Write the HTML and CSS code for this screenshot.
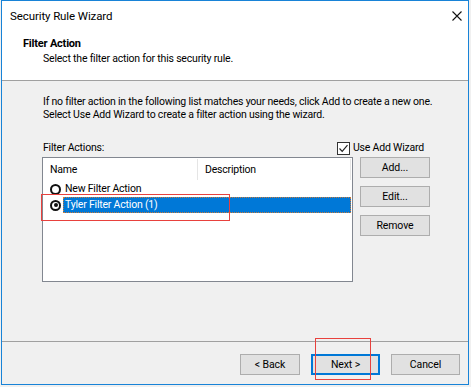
FILE: index.html
```html
<!DOCTYPE html>
<html lang="en">
<head>
  <meta charset="UTF-8">
  <title>Security Rule Wizard</title>
  <link rel="stylesheet" href="styles.css">
</head>
<body>

  <div class="window">
    <div class="titlebar">
      <span class="title">Security Rule Wizard</span>
      <svg class="close" width="10" height="10" viewBox="0 0 10 10">
        <path d="M0.5 0.5 L9.5 9.5 M9.5 0.5 L0.5 9.5" stroke="#111" stroke-width="1.1" fill="none"/>
      </svg>
    </div>

    <div class="header">
      <div class="header-title">Filter Action</div>
      <div class="header-sub">Select the filter action for this security rule.</div>
    </div>

    <div class="content">
      <p class="intro">If no filter action in the following list matches your needs, click Add to create a new one.<br>Select Use Add Wizard to create a filter action using the wizard.</p>

      <div class="actions-row">
        <span>Filter Actions:</span>
        <label class="check">
          <span class="box">
            <svg width="11" height="11" viewBox="0 0 11 11"><path d="M1.5 5.5 L4.2 8.3 L9.5 2.2" stroke="#222" stroke-width="1.2" fill="none"/></svg>
          </span>
          Use Add Wizard
        </label>
      </div>

      <div class="actions-grid">
        <div class="listbox">
          <div class="list-head">
            <div class="col-name">Name</div>
            <div class="col-desc">Description</div>
          </div>
          <div class="list-row">
            <span class="radio"></span>
            <span class="row-text">New Filter Action</span>
          </div>
          <div class="list-row">
            <span class="radio on"></span>
            <span class="row-text selected">Tyler Filter Action (1)</span>
          </div>
        </div>

        <div class="side-buttons">
          <button class="btn">Add...</button>
          <button class="btn">Edit...</button>
          <button class="btn">Remove</button>
        </div>
      </div>

      <!-- annotation box around the selected row -->
      <div class="mark mark-row"></div>
    </div>

    <div class="footer">
      <button class="btn back">&lt; Back</button>
      <button class="btn next">Next &gt;</button>
      <button class="btn cancel">Cancel</button>
      <div class="mark mark-next"></div>
    </div>
  </div>

</body>
</html>
```

FILE: styles.css
```css
body {
  margin: 0;
  background: #f0f0f0;
  font-family: Roboto, 'Liberation Sans', sans-serif;
  font-size: 10.5px;
  letter-spacing: -0.2px;
  color: #000;
}

.window {
  margin-left: 1px;
  width: 468px;
  height: 385px;
  box-sizing: border-box;
  border: 1px solid #1883d7;
  background: #f0f0f0;
  display: flex;
  flex-direction: column;
}

.titlebar {
  height: 29px;
  background: #fff;
  display: flex;
  align-items: center;
  justify-content: space-between;
  padding: 0 6px 0 8px;
}

.title {
  font-size: 11.5px;
  letter-spacing: -0.1px;
}

.header {
  background: #fff;
  height: 51px;
  border-bottom: 1px solid #a0a0a0;
  box-sizing: border-box;
  padding-top: 7px;
}

.header-title {
  font-weight: 700;
  font-size: 11px;
  padding-left: 21px;
  line-height: 14px;
}

.header-sub {
  padding-left: 41px;
  line-height: 15px;
}

.content {
  position: relative;
  flex: 1;
  padding: 14px 0 0 41px;
}

.intro {
  margin: 0;
  line-height: 13px;
  white-space: nowrap;
}

.actions-row {
  display: grid;
  grid-template-columns: 294px auto;
  align-items: end;
  margin-top: 20px;
  line-height: 14px;
}

.check {
  display: flex;
  align-items: center;
  gap: 3px;
}

.box {
  width: 11px;
  height: 11px;
  border: 1px solid #333;
  background: #fff;
  display: flex;
}

.actions-grid {
  display: flex;
  gap: 7px;
  margin-top: 2px;
  margin-left: -1px;
}

.listbox {
  width: 311px;
  height: 125px;
  box-sizing: border-box;
  border: 1px solid #828790;
  background: #fff;
}

.list-head {
  display: flex;
  height: 23px;
  align-items: center;
}

.list-head > div {
  height: 21px;
  line-height: 21px;
  padding-left: 7px;
}

.col-name {
  width: 147px;
  border-right: 1px solid #e5e5e5;
}

.col-desc {
  flex: 1;
  border-right: 1px solid #e5e5e5;
  margin-right: 1px;
}

.list-row {
  display: flex;
  align-items: center;
  height: 16px;
  padding-left: 7px;
}

.radio {
  width: 7px;
  height: 7px;
  border: 2px solid #111;
  border-radius: 50%;
  position: relative;
  margin-right: 2px;
}

.radio.on::after {
  content: "";
  position: absolute;
  left: 1.5px;
  top: 1.5px;
  width: 4px;
  height: 4px;
  border-radius: 50%;
  background: #111;
}

.row-text {
  line-height: 16px;
  padding-left: 2px;
}

.row-text.selected {
  flex: 1;
  margin-right: 1px;
  background: #0078d7;
  color: #fff;
  outline: 1px dotted #c87a3a;
  outline-offset: -1px;
}

.side-buttons {
  display: flex;
  flex-direction: column;
  gap: 8px;
}

.btn {
  font-family: inherit;
  font-size: 10.5px;
  letter-spacing: -0.1px;
  height: 21px;
  width: 70px;
  padding: 0;
  background: #e1e1e1;
  border: 1px solid #adadad;
  color: #000;
}

.footer {
  position: relative;
  height: 43px;
  border-top: 1px solid #a0a0a0;
  box-sizing: border-box;
  display: flex;
  justify-content: flex-end;
  padding: 12px 8px 0 0;
  gap: 11px;
}

.back {
  width: 60px;
}

.next {
  width: 69px;
  border: 2px solid #0078d7;
}

.cancel {
  width: 69px;
}

.mark {
  position: absolute;
  border: 1px solid #e8413d;
}

.mark-row {
  left: 39px;
  top: 113px;
  width: 187px;
  height: 25px;
}

.mark-next {
  left: 313px;
  top: -4px;
  width: 54px;
  height: 40px;
}
```
